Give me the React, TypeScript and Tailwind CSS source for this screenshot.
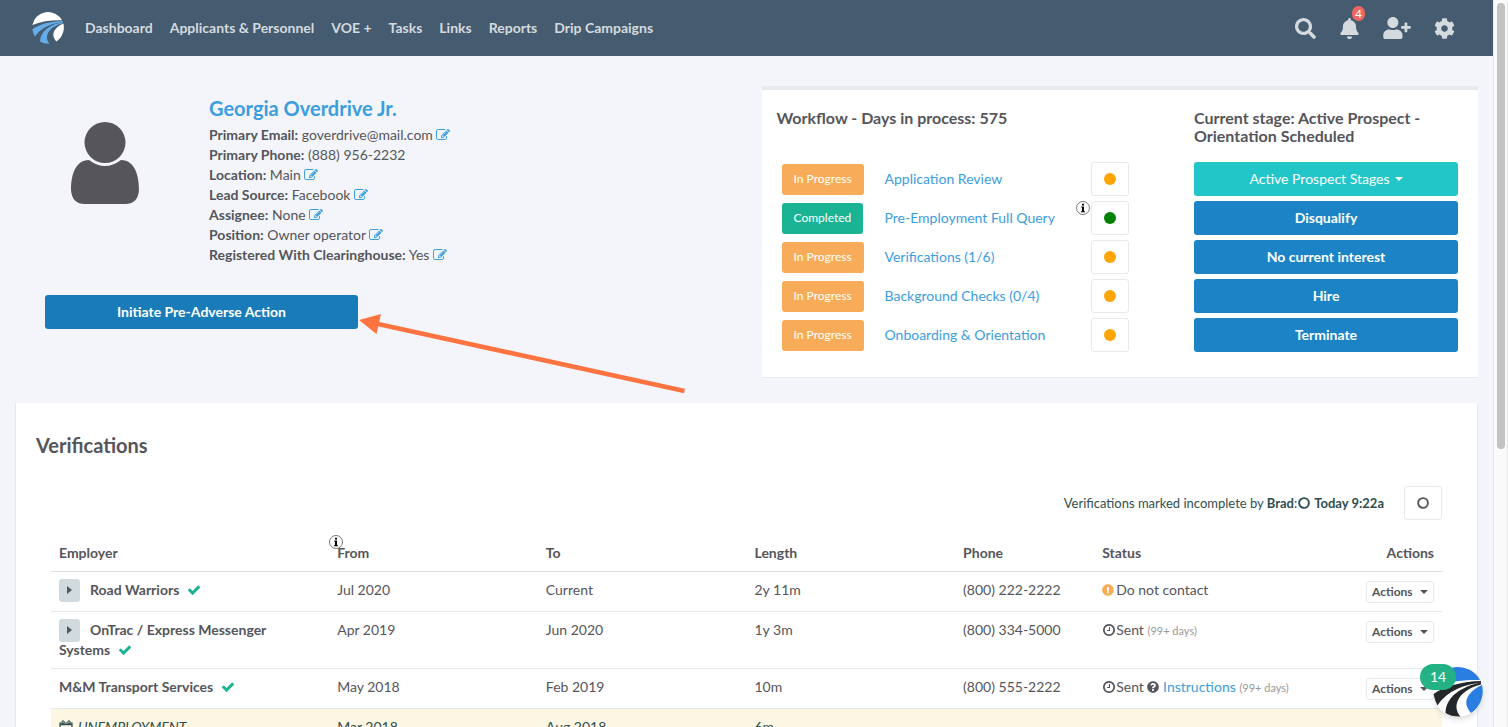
import type { ReactNode } from 'react';
import { FaBell, FaCog, FaExclamationCircle, FaQuestionCircle, FaSearch, FaUserPlus } from 'react-icons/fa';

const navLinks = ['Dashboard', 'Applicants & Personnel', 'VOE +', 'Tasks', 'Links', 'Reports', 'Drip Campaigns'];

const details = [
  { label: 'Primary Email', value: 'goverdrive@mail.com', editable: true },
  { label: 'Primary Phone', value: '(888) 956-2232', editable: false },
  { label: 'Location', value: 'Main', editable: true },
  { label: 'Lead Source', value: 'Facebook', editable: true },
  { label: 'Assignee', value: 'None', editable: true },
  { label: 'Position', value: 'Owner operator', editable: true },
  { label: 'Registered With Clearinghouse', value: 'Yes', editable: true },
];

const workflow = [
  { name: 'Application Review', done: false },
  { name: 'Pre-Employment Full Query', done: true },
  { name: 'Verifications (1/6)', done: false },
  { name: 'Background Checks (0/4)', done: false },
  { name: 'Onboarding & Orientation', done: false },
];

const stageActions = ['Disqualify', 'No current interest', 'Hire', 'Terminate'];

const Svg = ({ d, className }: { d: string; className: string }) => (
  <svg viewBox="0 0 1792 1792" fill="currentColor" className={className} aria-hidden="true">
    <path d={d} />
  </svg>
);

const EditIcon = () => (
  <Svg
    className="inline-block size-[14px] align-[-2px]"
    d="M888 1184l116-116-152-152-116 116v56h96v96h56zm440-720q-16-16-33 1l-350 350q-17 17-1 33t33-1l350-350q17-17 1-33zm80 594v190q0 119-84.5 203.5t-203.5 84.5h-832q-119 0-203.5-84.5t-84.5-203.5v-832q0-119 84.5-203.5t203.5-84.5h832q63 0 117 25 15 7 18 23 3 17-9 29l-49 49q-14 14-32 8-23-6-45-6h-832q-66 0-113 47t-47 113v832q0 66 47 113t113 47h832q66 0 113-47t47-113v-126q0-13 9-22l64-64q15-15 35-7t20 29zm-96-738l288 288-672 672h-288v-288zm444 132l-92 92-288-288 92-92q28-28 68-28t68 28l152 152q28 28 28 68t-28 68z"
  />
);

const CheckIcon = () => (
  <Svg
    className="ml-1 inline-block size-[14px] align-[-2px] text-[#1ab394]"
    d="M1671 566q0 40-28 68l-724 724-136 136q-28 28-68 28t-68-28l-136-136-362-362q-28-28-28-68t28-68l136-136q28-28 68-28t68 28l294 295 656-657q28-28 68-28t68 28l136 136q28 28 28 68z"
  />
);

const ClockIcon = () => (
  <Svg
    className="inline-block size-[14px] align-[-2px]"
    d="M1024 544v448q0 14-9 23t-23 9h-320q-14 0-23-9t-9-23v-64q0-14 9-23t23-9h224v-352q0-14 9-23t23-9h64q14 0 23 9t9 23zm416 352q0-148-73-273t-198-198-273-73-273 73-198 198-73 273 73 273 198 198 273 73 273-73 198-198 73-273zm224 0q0 209-103 385.5t-279.5 279.5-385.5 103-385.5-103-279.5-279.5-103-385.5 103-385.5 279.5-279.5 385.5-103 385.5 103 279.5 279.5 103 385.5z"
  />
);

const InfoIcon = () => (
  <svg viewBox="0 0 14 14" className="size-[14px]" aria-hidden="true">
    <circle cx="7" cy="7" r="6.5" fill="#fff" stroke="#555" strokeWidth="0.8" />
    <path d="M6 2.8h2v1.8H6zM5.2 5.6H8v4.6h1v1H5v-1h1V6.5h-.8z" fill="#000" />
  </svg>
);

const Ring = ({ className }: { className: string }) => (
  <svg viewBox="0 0 12 12" fill="none" stroke="currentColor" className={className} aria-hidden="true">
    <circle cx="6" cy="6" r="4.9" strokeWidth="1.9" />
  </svg>
);

const Caret = () => (
  <svg viewBox="0 0 8 4" className="inline-block h-1 w-2" aria-hidden="true">
    <path d="M0 0h8L4 4z" fill="currentColor" />
  </svg>
);

// Road running to the horizon inside a circle
const RoadLogo = ({ sky, road, land, className }: { sky: string; road: string; land: string; className: string }) => (
  <svg viewBox="0 0 100 100" className={className} aria-hidden="true">
    <path d="M1 41A50 50 0 0 1 94 26C62 25 28 29 1 41z" fill={sky} />
    <path d="M96 28C60 29 22 38 1 54Q3 66 9 77C26 52 50 38 96 31z" fill={road} />
    <path d="M96 31C58 39 26 58 25 92Q38 100 55 99C38 80 47 48 96 35z" fill={road} />
    <path d="M98 36C74 47 54 68 76 92C92 82 104 60 98 36z" fill={land} />
  </svg>
);

const ExpandButton = () => (
  <button aria-label="Expand" className="-mt-[6px] mr-[10px] -mb-1 inline-flex h-[23px] w-[21px] items-center justify-center rounded-[3px] bg-[#d1dade] align-middle">
    <svg viewBox="0 0 5 8" className="h-2 w-[5px]" aria-hidden="true">
      <path d="M0 0l5 4-5 4z" fill="currentColor" />
    </svg>
  </button>
);

type Row = { employer: ReactNode; from: string; to: string; length: string; phone: string; status: ReactNode };

const rows: Row[] = [
  {
    employer: <><ExpandButton />Road Warriors&nbsp;<CheckIcon /></>,
    from: 'Jul 2020',
    to: 'Current',
    length: '2y 11m',
    phone: '(800) 222-2222',
    status: <><FaExclamationCircle className="mr-[2px] inline size-3 align-[-1px] text-[#f8ac59]" />Do not contact</>,
  },
  {
    employer: (
      <>
        <ExpandButton />OnTrac / Express Messenger{' '}
        <span className="whitespace-nowrap">Systems&nbsp;<CheckIcon /></span>
      </>
    ),
    from: 'Apr 2019',
    to: 'Jun 2020',
    length: '1y 3m',
    phone: '(800) 334-5000',
    status: <><ClockIcon />Sent <small className="text-[11px] text-[#999]">(99+ days)</small></>,
  },
  {
    employer: <>M&M Transport Services&nbsp;<CheckIcon /></>,
    from: 'May 2018',
    to: 'Feb 2019',
    length: '10m',
    phone: '(800) 555-2222',
    status: (
      <>
        <ClockIcon />Sent <FaQuestionCircle className="inline size-3 align-[-1px]" />{' '}
        <a href="#instructions" className="text-[#3c9ddf]">Instructions</a>{' '}
        <small className="text-[11px] text-[#999]">(99+ days)</small>
      </>
    ),
  },
];

const Navbar = () => (
  <nav className="flex h-14 items-center bg-[#455b70] pr-[38px] pl-8 text-[#d5dadf]">
    <a href="#home" aria-label="Home" className="mr-[21px]">
      <RoadLogo sky="#fff" road="#64ade9" land="#fff" className="size-8" />
    </a>
    <div className="flex flex-1 gap-[17px] font-bold">
      {navLinks.map((link) => (
        <a key={link} href="#nav">{link}</a>
      ))}
    </div>
    <div className="flex items-center gap-[23px]">
      <button aria-label="Search"><FaSearch className="size-[21px]" /></button>
      <button aria-label="Notifications" className="relative">
        <FaBell className="size-[21px]" />
        <span className="absolute -top-3 left-[13px] rounded-full bg-[#ed6661] px-[3px] text-xs leading-[15px] text-white">4</span>
      </button>
      <button aria-label="Add applicant"><FaUserPlus className="h-[22px] w-7" /></button>
      <button aria-label="Settings"><FaCog className="size-[21px]" /></button>
    </div>
  </nav>
);

const Profile = () => (
  <div className="pl-[30px]">
    <div className="flex pt-[9px]">
      <div className="w-[164px] shrink-0 pt-[27px] pl-[26px]">
        <svg viewBox="0 0 68 82" className="h-[82px] w-[68px]" fill="currentColor" aria-hidden="true">
          <circle cx="34" cy="20.5" r="20.5" />
          <path d="M18 38Q34 50 50 38C64 38 68 54 68 68Q67 82 54 82H14Q1 82 0 68C0 54 4 38 18 38z" />
        </svg>
      </div>
      <div>
        <h2 className="mb-1 text-xl leading-[26px] font-bold text-[#3c9ddf]">Georgia Overdrive Jr.</h2>
        {details.map((item) => (
          <div key={item.label}>
            <strong>{item.label}:</strong> {item.value}{' '}
            {item.editable && (
              <button aria-label={`Edit ${item.label}`} className="text-[#3c9ddf]"><EditIcon /></button>
            )}
          </div>
        ))}
      </div>
    </div>
    <div className="relative mt-[30px] w-[313px]">
      <button className="h-[34px] w-full rounded-[3px] bg-[#1a7bb9] font-bold text-white">Initiate Pre-Adverse Action</button>
      <svg viewBox="0 0 330 84" className="absolute top-4 left-full h-[84px] w-[330px]" aria-hidden="true">
        <path d="M20 13L326.500 80" stroke="#ff7340" strokeWidth="4.500" />
        <path d="M1 9l22-6-4.500 20z" fill="#ff7340" />
      </svg>
    </div>
  </div>
);

const WorkflowCard = () => (
  <div className="flex border-t-4 border-b border-[#e7eaec] bg-white pt-[19px] pr-5 pb-[25px] pl-[15px]">
    <div className="mr-[65px] flex-1">
      <h4 className="mb-[17px] h-9 text-base leading-[18px] font-bold">Workflow - Days in process: 575</h4>
      <div className="flex flex-col gap-[5px] pl-[5px]">
        {workflow.map((step) => (
          <div key={step.name} className="flex items-center">
            <div className="w-[103px]">
              <button className={step.done ? 'h-[31px] rounded-[3px] bg-[#1ab394] px-3 text-xs text-white' : 'h-[31px] rounded-[3px] bg-[#f8ac59] px-3 text-xs text-white'}>
                {step.done ? 'Completed' : 'In Progress'}
              </button>
            </div>
            <a href="#step" className="flex-1 text-[#3c9ddf]">{step.name}</a>
            <div className="relative">
              <button aria-label={`${step.name} status`} className="flex h-[34px] w-[38px] items-center justify-center rounded-[3px] border border-[#e7eaec] bg-white">
                <span className={step.done ? 'size-3 rounded-full bg-[#008000]' : 'size-3 rounded-full bg-[#ffa500]'} />
              </button>
              {step.done && <span className="absolute top-0 right-full mr-px"><InfoIcon /></span>}
            </div>
          </div>
        ))}
      </div>
    </div>
    <div className="w-[264px] shrink-0">
      <h4 className="mb-[17px] text-base leading-[18px] font-bold">Current stage: Active Prospect - Orientation Scheduled</h4>
      <div className="flex flex-col gap-[5px]">
        <button className="flex h-[34px] items-center justify-center gap-[5px] rounded-[3px] bg-[#23c6c8] text-white">
          Active Prospect Stages <Caret />
        </button>
        {stageActions.map((action) => (
          <button key={action} className="h-[34px] rounded-[3px] bg-[#1c84c6] font-bold text-white">{action}</button>
        ))}
      </div>
    </div>
  </div>
);

const Verifications = () => (
  <section className="mx-[15px] mt-[25px] border-x border-[#e7eaec] bg-white pt-[30px]">
    <h2 className="pl-5 text-xl leading-6 font-bold">Verifications</h2>
    <div className="mt-[29px] flex items-center justify-end pr-[35px]">
      <p className="mr-5 flex items-center text-[13px] text-[#2f4f4f]">
        Verifications marked incomplete by&nbsp;<strong>Brad</strong>:
        <Ring className="mr-1 ml-px size-3" />
        <strong>Today 9:22a</strong>
      </p>
      <button aria-label="Mark complete" className="flex h-[34px] w-[38px] items-center justify-center rounded-[3px] border border-[#e7eaec]">
        <Ring className="size-3" />
      </button>
    </div>
    <div className="mt-[15px] px-[35px]">
      <table className="w-full table-fixed text-left">
        <thead>
          <tr className="border-b border-[#ddd]">
            <th className="w-1/5 p-2">Employer</th>
            <th className="relative w-[15%] p-2">
              <span className="absolute top-0 left-0"><InfoIcon /></span>
              From
            </th>
            <th className="w-[15%] p-2">To</th>
            <th className="w-[15%] p-2">Length</th>
            <th className="w-[10%] p-2">Phone</th>
            <th className="p-2">Status</th>
            <th className="w-[88px] p-2 text-right">Actions</th>
          </tr>
        </thead>
        <tbody className="align-top">
          {rows.map((row) => (
            <tr key={row.from} className="border-b border-[#e7eaec]">
              <td className="p-2 font-bold">{row.employer}</td>
              <td className="p-2">{row.from}</td>
              <td className="p-2">{row.to}</td>
              <td className="p-2">{row.length}</td>
              <td className="p-2 whitespace-nowrap">{row.phone}</td>
              <td className="p-2">{row.status}</td>
              <td className="px-2 pt-[9px] pb-2">
                <button className="ml-auto flex h-[22px] w-[68px] items-center justify-between rounded-[3px] border border-[#e7eaec] bg-white px-[5px] text-xs font-bold">
                  Actions <Caret />
                </button>
              </td>
            </tr>
          ))}
          <tr className="bg-[#fdf6e3] text-[#2f4f4f]">
            <td className="p-2 italic">
              <svg viewBox="0 0 14 14" className="mr-[5px] inline-block size-[14px] align-[-2px]" fill="none" stroke="currentColor" aria-hidden="true">
                <path d="M1 3h12v10.300H1zM5 8l4 4M9 8l-4 4" strokeWidth="1.200" />
                <path d="M1 4.500h12" strokeWidth="1.500" />
                <path d="M3 1h2v2.500H3zM9 1h2v2.500H9z" fill="#fdf6e3" strokeWidth="1" />
              </svg>
              UNEMPLOYMENT
            </td>
            <td className="p-2">Mar 2018</td>
            <td className="p-2">Aug 2018</td>
            <td className="p-2">6m</td>
            <td className="p-2" colSpan={3} />
          </tr>
        </tbody>
      </table>
    </div>
  </section>
);

const App = () => {
  return (
    <div className="relative flex h-screen overflow-hidden bg-[#f3f5fa] font-[Lato,sans-serif] text-sm leading-5 text-[#55555b]">
      <div className="min-w-0 flex-1">
        <Navbar />
        <main>
          <div className="grid grid-cols-2 gap-[30px] px-[15px] pt-[30px]">
            <Profile />
            <WorkflowCard />
          </div>
          <Verifications />
        </main>
      </div>

      <div className="w-[15px] shrink-0 border-x border-[#e8e8e8] bg-[#fafafa] px-[3px] pt-[3px]">
        <div className="h-[446px] w-2 rounded-full bg-[#c2c2c2]" />
      </div>

      <button aria-label="Open chat" className="absolute right-[25px] bottom-[10px] size-[50px] rounded-full bg-white shadow-md">
        <RoadLogo sky="#2a7de1" road="#25282a" land="#2a7de1" className="size-full" />
        <span className="absolute -top-[3px] -left-[13px] flex h-[26px] w-9 items-center justify-center rounded-full bg-[#22b286] text-sm text-white">14</span>
      </button>
    </div>
  );
};

export default App;
